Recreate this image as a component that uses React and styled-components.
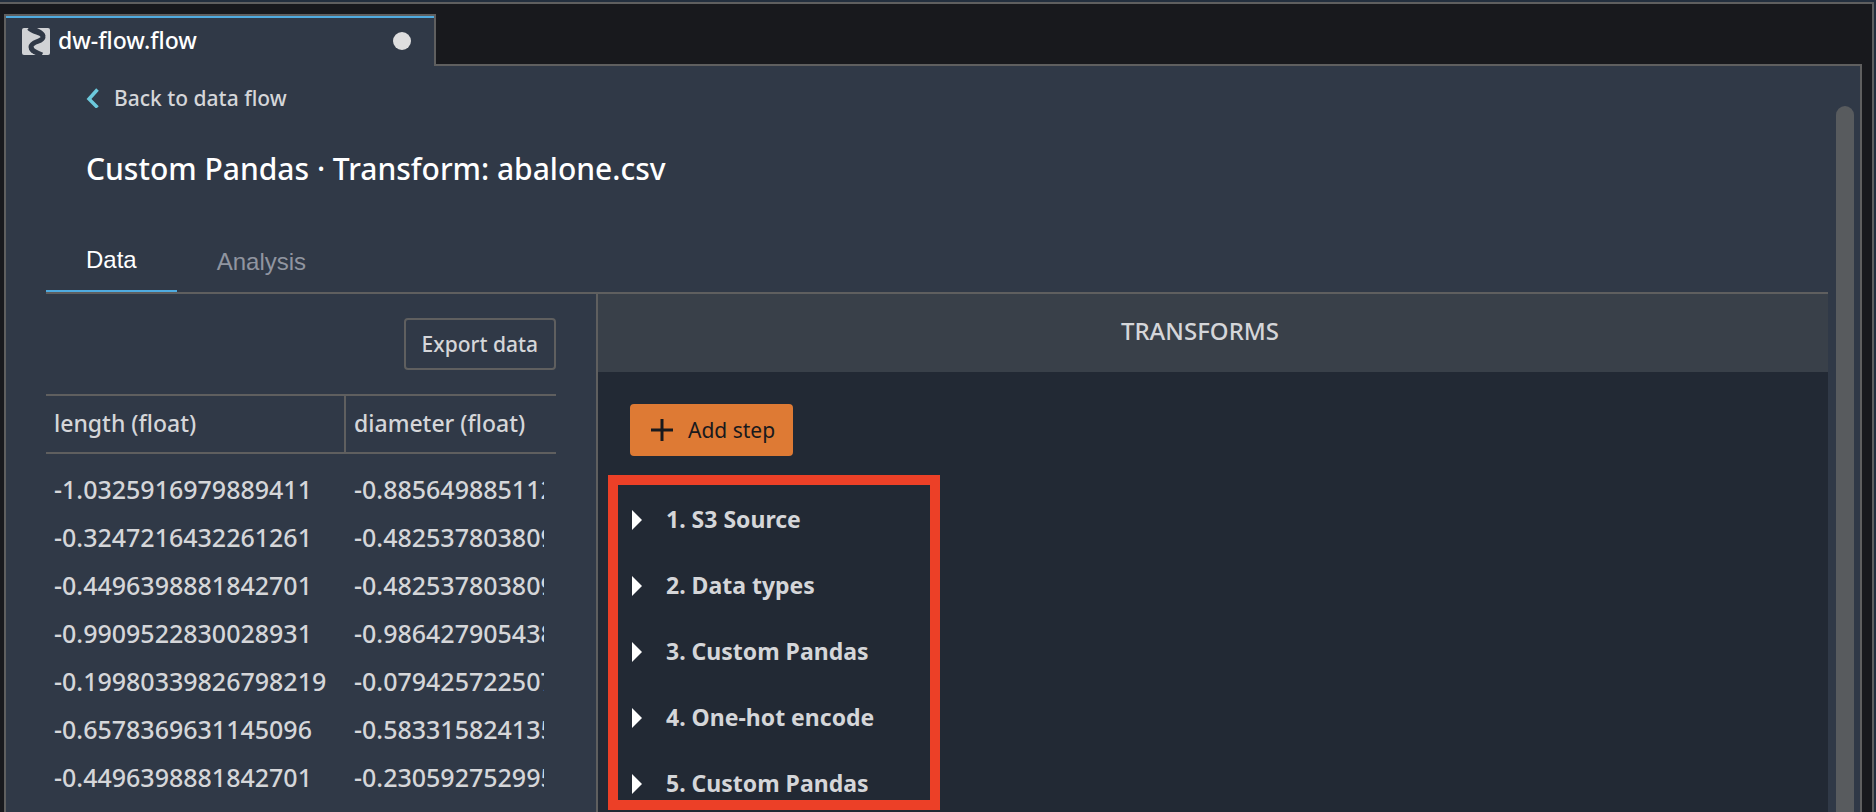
import React from "react";
import styled, { createGlobalStyle } from "styled-components";

const color = {
  frame: "#232f3e",
  dock: "#18191d",
  panel: "#303947",
  pane: "#222934",
  paneHeader: "#394049",
  border: "#5f5f5f",
  text: "#d5d6d9",
  bright: "#ffffff",
  muted: "#9095a0",
  blue: "#4fabe0",
  cyan: "#6cc9dc",
  orange: "#de7a34",
  ink: "#18191d",
  red: "#ec4027",
  thumb: "#585b5e",
};

const GlobalStyle = createGlobalStyle`
  * { box-sizing: border-box; }
  body {
    margin: 0;
    background: ${color.dock};
    color: ${color.text};
    font-family: "Noto Sans", "Open Sans", sans-serif;
    font-weight: 500;
  }
  button { font: inherit; color: inherit; cursor: pointer; }
`;

const Frame = styled.div`
  display: flex;
  height: 100vh;
  padding: 2px 2px 0 0;
  background: ${color.frame};
  overflow: hidden;
`;

const Dock = styled.div`
  flex: 1;
  min-width: 0;
  display: flex;
  flex-direction: column;
  padding: 10px 10px 0 4px;
  border-top: 2px solid ${color.border};
  border-right: 2px solid ${color.border};
  background: ${color.dock};
`;

const FileTab = styled.div`
  position: relative;
  z-index: 1;
  flex: none;
  align-self: flex-start;
  display: flex;
  align-items: center;
  gap: 8px;
  width: 432px;
  height: 52px;
  margin-bottom: -2px;
  padding: 2px 23px 2px 16px;
  border: 2px solid ${color.border};
  border-bottom: 0;
  background: ${color.panel};
  box-shadow: inset 0 2px 0 ${color.blue};
`;

const FileName = styled.span`
  flex: 1;
  padding-bottom: 2px;
  font-size: 23px;
  line-height: 32px;
  color: ${color.bright};
`;

const UnsavedDot = styled.span`
  width: 18px;
  height: 18px;
  border-radius: 50%;
  background: #dededf;
`;

const Panel = styled.div`
  flex: 1;
  min-height: 0;
  display: flex;
  border: 2px solid ${color.border};
  border-bottom: 0;
  background: ${color.panel};
`;

const Content = styled.main`
  flex: 1;
  min-width: 0;
  display: flex;
  flex-direction: column;
  padding: 16px 0 0 40px;
`;

const ScrollTrack = styled.div`
  flex: none;
  display: flex;
  width: 32px;
  padding: 40px 6px 0 8px;
`;

const ScrollThumb = styled.div`
  flex: 1;
  border-radius: 9px 9px 0 0;
  background: ${color.thumb};
`;

const BackLink = styled.a`
  align-self: flex-start;
  display: flex;
  align-items: center;
  gap: 15px;
  margin-left: 40px;
  font-size: 21px;
  line-height: 32px;
  color: ${color.text};
  text-decoration: none;
`;

const Title = styled.h1`
  margin: 35px 0 0 40px;
  font-size: 30px;
  line-height: 40px;
  font-weight: 500;
  color: ${color.bright};
`;

const Tabs = styled.div`
  flex: none;
  display: flex;
  align-items: flex-end;
  height: 64px;
  margin-top: 41px;
  border-bottom: 2px solid ${color.border};
`;

const TabButton = styled.button`
  padding: 16px 40px;
  border: 0;
  border-bottom: ${(p) => (p.$active ? `2px solid ${color.blue}` : "0")};
  background: none;
  && {
    font: 24px/28px "Liberation Sans", Arial, sans-serif;
    color: ${(p) => (p.$active ? color.bright : color.muted)};
  }
`;

const Split = styled.div`
  flex: 1;
  min-height: 0;
  display: grid;
  grid-template-columns: 552px minmax(0, 1fr);
`;

const DataPane = styled.section`
  display: flex;
  flex-direction: column;
  gap: 24px;
  min-height: 0;
  padding: 24px 40px 0 0;
  border-right: 2px solid ${color.border};
  overflow: hidden;
`;

const Button = styled.button`
  flex: none;
  display: inline-flex;
  align-items: center;
  justify-content: center;
  gap: 15px;
  height: 52px;
  padding: 0 16px;
  border: 2px solid ${color.border};
  border-radius: 4px;
  background: none;
  && { font-size: 21px; }
`;

const ExportButton = styled(Button)`
  align-self: flex-end;
`;

const AddButton = styled(Button)`
  align-self: flex-start;
  margin-left: 22px;
  padding: 0 16px 0 19px;
  border-color: ${color.orange};
  background: ${color.orange};
  && { color: ${color.ink}; font-weight: 400; }
`;

const Table = styled.table`
  width: 100%;
  table-layout: fixed;
  border-collapse: separate;
  border-spacing: 0;
  text-align: left;
  tbody::before {
    content: "";
    display: block;
    height: 11px;
  }
`;

const HeadCell = styled.th`
  width: ${(p) => p.$width || "auto"};
  height: 60px;
  padding: 0 8px 2px;
  border: solid ${color.border};
  border-width: 2px ${(p) => (p.$divided ? "2px" : "0")} 2px 0;
  font-size: 23px;
  font-weight: 500;
`;

const Cell = styled.td`
  height: 48px;
  padding: 0 12px 0 8px;
  font-size: 25px;
`;

const Value = styled.div`
  line-height: 36px;
  white-space: nowrap;
  overflow: hidden;
`;

const TransformPane = styled.section`
  display: flex;
  flex-direction: column;
  min-height: 0;
  background: ${color.pane};
`;

const PaneHeader = styled.h2`
  flex: none;
  display: flex;
  align-items: center;
  justify-content: center;
  height: 78px;
  margin: 0;
  padding: 0 26px 6px 0;
  background: ${color.paneHeader};
  font-size: 24px;
  font-weight: 500;
`;

const PaneBody = styled.div`
  flex: 1;
  min-height: 0;
  display: flex;
  flex-direction: column;
  gap: 19px;
  padding: 32px 10px 2px;
`;

const StepList = styled.ol`
  flex: 1;
  min-height: 0;
  width: 332px;
  margin: 0;
  padding: 2px 0 0 14px;
  border: 10px solid ${color.red};
  list-style: none;
  overflow: hidden;
`;

const StepButton = styled.button`
  display: flex;
  align-items: center;
  gap: 24px;
  width: 100%;
  height: 66px;
  padding: 0;
  border: 0;
  background: none;
  && {
    font-size: 23px;
    font-weight: 700;
  }
`;

const StepLabel = styled.span`
  padding-bottom: 2px;
`;

const FlowLogo = () => (
  <svg width="28" height="28" viewBox="0 0 28 28" aria-hidden="true">
    <rect y="1" width="28" height="27" rx="2" fill="#d0d2d5" />
    <path
      d="M7 1C12 6 21 5 21 10C21 15 9 14 9 20C9 24 14 25 20 28"
      fill="none"
      stroke={color.panel}
      strokeWidth="5"
    />
    <path d="M6 1L15 1C19 3 23 5 23.500 9L19 9C17 5 9 5 6 1Z" fill={color.panel} />
    <path d="M15 28L20 28C16 26 12 24 11.500 20L7 20C7 24 10 27 15 28Z" fill={color.panel} />
  </svg>
);

const BackIcon = () => (
  <svg width="13" height="20" viewBox="0 0 13 20" aria-hidden="true">
    <path d="M11.500 1.500L3 11L11.500 19.500" fill="none" stroke={color.cyan} strokeWidth="3.500" />
  </svg>
);

const PlusIcon = () => (
  <svg width="22" height="22" viewBox="0 0 22 22" aria-hidden="true">
    <path d="M11 0V22M0 11H22" stroke={color.ink} strokeWidth="3" />
  </svg>
);

const Caret = () => (
  <svg width="10" height="20" viewBox="0 0 10 20" aria-hidden="true">
    <path d="M0 0L10 10L0 20Z" fill={color.bright} />
  </svg>
);

const rows = [
  ["-1.0325916979889411", "-0.8856498851128"],
  ["-0.3247216432261261", "-0.4825378038093"],
  ["-0.4496398881842701", "-0.4825378038093"],
  ["-0.9909522830028931", "-0.9864279054384"],
  ["-0.19980339826798219", "-0.0794257225072"],
  ["-0.6578369631145096", "-0.5833158241351"],
  ["-0.4496398881842701", "-0.2305927529951"],
];

const steps = [
  "1. S3 Source",
  "2. Data types",
  "3. Custom Pandas",
  "4. One-hot encode",
  "5. Custom Pandas",
];

export default function App() {
  return (
    <Frame>
      <GlobalStyle />
      <Dock>
        <FileTab>
          <FlowLogo />
          <FileName>dw-flow.flow</FileName>
          <UnsavedDot />
        </FileTab>
        <Panel>
          <Content>
            <BackLink href="#flow">
              <BackIcon />
              Back to data flow
            </BackLink>
            <Title>Custom Pandas · Transform: abalone.csv</Title>
            <Tabs role="tablist">
              <TabButton role="tab" aria-selected="true" $active>
                Data
              </TabButton>
              <TabButton role="tab" aria-selected="false">
                Analysis
              </TabButton>
            </Tabs>
            <Split>
              <DataPane>
                <ExportButton>Export data</ExportButton>
                <Table>
                  <thead>
                    <tr>
                      <HeadCell $width="300px" $divided>
                        length (float)
                      </HeadCell>
                      <HeadCell>diameter (float)</HeadCell>
                    </tr>
                  </thead>
                  <tbody>
                    {rows.map((row, i) => (
                      <tr key={i}>
                        {row.map((value, j) => (
                          <Cell key={j}>
                            <Value>{value}</Value>
                          </Cell>
                        ))}
                      </tr>
                    ))}
                  </tbody>
                </Table>
              </DataPane>
              <TransformPane>
                <PaneHeader>TRANSFORMS</PaneHeader>
                <PaneBody>
                  <AddButton>
                    <PlusIcon />
                    Add step
                  </AddButton>
                  <StepList>
                    {steps.map((step) => (
                      <li key={step}>
                        <StepButton aria-expanded="false">
                          <Caret />
                          <StepLabel>{step}</StepLabel>
                        </StepButton>
                      </li>
                    ))}
                  </StepList>
                </PaneBody>
              </TransformPane>
            </Split>
          </Content>
          <ScrollTrack>
            <ScrollThumb />
          </ScrollTrack>
        </Panel>
      </Dock>
    </Frame>
  );
}
